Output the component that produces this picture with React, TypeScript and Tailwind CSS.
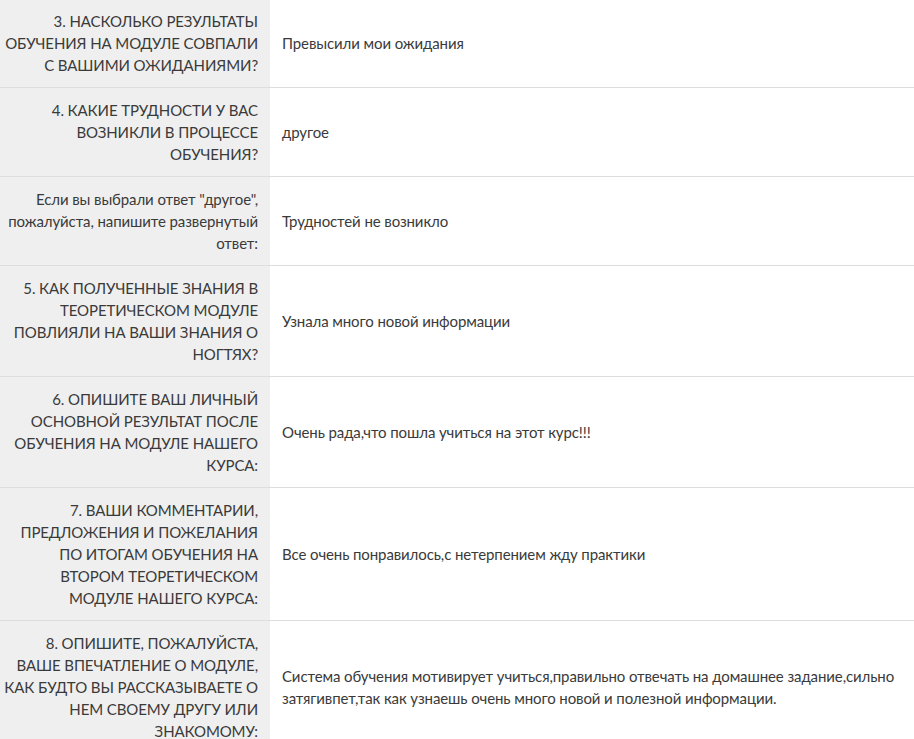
import React from "react";

const rows: { q: string[]; a: string[] }[] = [
  { q: ["3. НАСКОЛЬКО РЕЗУЛЬТАТЫ", "ОБУЧЕНИЯ НА МОДУЛЕ СОВПАЛИ", "С ВАШИМИ ОЖИДАНИЯМИ?"], a: ["Превысили мои ожидания"] },
  { q: ["4. КАКИЕ ТРУДНОСТИ У ВАС", "ВОЗНИКЛИ В ПРОЦЕССЕ", "ОБУЧЕНИЯ?"], a: ["другое"] },
  { q: ["Если вы выбрали ответ \"другое\",", "пожалуйста, напишите развернутый", "ответ:"], a: ["Трудностей не возникло"] },
  { q: ["5. КАК ПОЛУЧЕННЫЕ ЗНАНИЯ В", "ТЕОРЕТИЧЕСКОМ МОДУЛЕ", "ПОВЛИЯЛИ НА ВАШИ ЗНАНИЯ О", "НОГТЯХ?"], a: ["Узнала много новой информации"] },
  { q: ["6. ОПИШИТЕ ВАШ ЛИЧНЫЙ", "ОСНОВНОЙ РЕЗУЛЬТАТ ПОСЛЕ", "ОБУЧЕНИЯ НА МОДУЛЕ НАШЕГО", "КУРСА:"], a: ["Очень рада,что пошла учиться на этот курс!!!"] },
  { q: ["7. ВАШИ КОММЕНТАРИИ,", "ПРЕДЛОЖЕНИЯ И ПОЖЕЛАНИЯ", "ПО ИТОГАМ ОБУЧЕНИЯ НА", "ВТОРОМ ТЕОРЕТИЧЕСКОМ", "МОДУЛЕ НАШЕГО КУРСА:"], a: ["Все очень понравилось,с нетерпением жду практики"] },
  {
    q: ["8. ОПИШИТЕ, ПОЖАЛУЙСТА,", "ВАШЕ ВПЕЧАТЛЕНИЕ О МОДУЛЕ,", "КАК БУДТО ВЫ РАССКАЗЫВАЕТЕ О", "НЕМ СВОЕМУ ДРУГУ ИЛИ", "ЗНАКОМОМУ:"],
    a: [
      "Система обучения мотивирует учиться,правильно отвечать на домашнее задание,сильно",
      "затягивпет,так как узнаешь очень много новой и полезной информации.",
    ],
  },
];

export default function App() {
  return (
    <div
      className="w-[914px] h-[739px] overflow-hidden bg-white text-[#3a3a3a] text-[15px] leading-[22px] tracking-[-0.1px]"
      style={{ fontFamily: 'Lato, "Liberation Sans", sans-serif' }}
    >
      <div className="-mt-px">
        {rows.map((r, i) => (
          <div key={i} className="flex border-b border-[#dddddd]">
            <div className="w-[270px] shrink-0 bg-[#efefef] pl-0 pr-[12px] py-[11px] flex flex-col items-end">
              {r.q.map((l, j) => (
                <div key={j} className="whitespace-nowrap text-right">{l}</div>
              ))}
            </div>
            <div className="flex-1 min-w-0 pl-[12px] py-[11px] flex flex-col justify-center">
              {r.a.map((l, j) => (
                <div key={j} className="whitespace-nowrap">{l}</div>
              ))}
            </div>
          </div>
        ))}
      </div>
    </div>
  );
}
